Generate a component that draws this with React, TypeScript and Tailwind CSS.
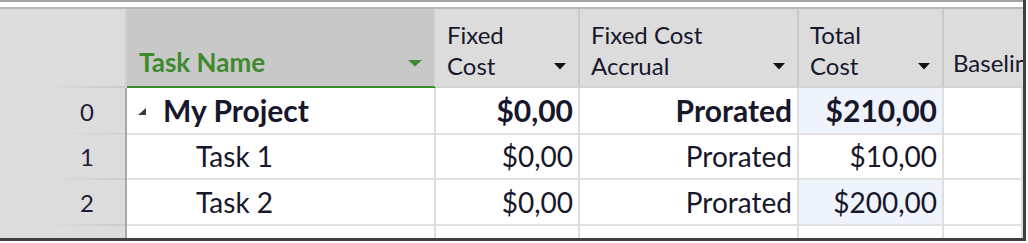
import React from 'react'

const cols = 'grid grid-cols-[127px_309px_144px_219px_145px_1fr]'
const ink = 'text-[#17172b]'

function Caret({ color = '#111111', w = 11 }: { color?: string; w?: number }) {
  return (
    <svg width={w} height="7" viewBox="0 0 11 7" preserveAspectRatio="none" className="shrink-0">
      <polygon points="0,0 11,0 5.5,6.5" fill={color} />
    </svg>
  )
}

function HeadCell({ lines, last }: { lines: string[]; last?: boolean }) {
  return (
    <div
      className={`flex items-end justify-between bg-[#dcdcdc] border-b-2 border-b-[#d2d2d2] pl-[11px] pr-[12px] pb-[5px] ${
        last ? '' : 'border-r-2 border-r-[#c9c9c9]'
      }`}
    >
      <div className={`text-[24px] leading-[31px] ${ink} whitespace-nowrap`}>
        {lines.map((l) => (
          <div key={l}>{l}</div>
        ))}
      </div>
      {!last && (
        <div className="mb-[11px]">
          <Caret w={12} />
        </div>
      )}
    </div>
  )
}

type Row = { id: string; name: string; fixed: string; accrual: string; total: string; bold?: boolean; hi?: boolean }

const rows: Row[] = [
  { id: '0', name: 'My Project', fixed: '$0,00', accrual: 'Prorated', total: '$210,00', bold: true, hi: true },
  { id: '1', name: 'Task 1', fixed: '$0,00', accrual: 'Prorated', total: '$10,00' },
  { id: '2', name: 'Task 2', fixed: '$0,00', accrual: 'Prorated', total: '$200,00', hi: true },
]

function DataRow({ row }: { row: Row }) {
  const weight = row.bold ? 'font-bold text-[30px]' : 'font-normal text-[28px]'
  const cell = `flex items-center border-b-2 border-b-[#e1e1e1] border-r-2 border-r-[#dedede] ${ink} ${weight}`
  return (
    <div className={`${cols} h-[46px] shrink-0`}>
      <div className="relative flex items-center justify-end bg-[#dcdcdc] border-r-2 border-r-[#a8a8a8] pr-[31px] text-[24px] text-[#1c1c3a]">
        <div className="absolute bottom-0 left-[50px] right-0 h-[2px] bg-gradient-to-r from-[#dcdcdc] to-[#cbcbcb]" />
        {row.id}
      </div>
      <div className={`${cell} ${row.bold ? 'pl-[11px]' : 'pl-[69px]'}`}>
        {row.bold && (
          <svg width="9" height="9" viewBox="0 0 9 9" className="mr-[16px] mt-[2px]">
            <polygon points="0,8 8,1 8,8" fill="#3a3a3a" />
          </svg>
        )}
        {row.name}
      </div>
      <div className={`${cell} justify-end pr-[5px]`}>{row.fixed}</div>
      <div className={`${cell} justify-end pr-[5px]`}>{row.accrual}</div>
      <div className={`${cell} justify-end pr-[5px] ${row.hi ? 'bg-[#eef3fc]' : ''}`}>{row.total}</div>
      <div className={`${cell} border-r-0`} />
    </div>
  )
}

export default function App() {
  return (
    <div className="w-[1028px] h-[243px] bg-white overflow-hidden font-['Lato','Open_Sans',sans-serif]">
      <div className="w-[1026px] h-[241px] border-r-[3px] border-b-[3px] border-[#3f3f3f] flex flex-col overflow-hidden bg-white">
        <div className="h-[2px] shrink-0 bg-[#a4a4a4]" />
        <div className="h-[5px] shrink-0 bg-white" />
        <div className="h-[2px] shrink-0 bg-[#b7b7b7]" />

        <div className={`${cols} h-[79px] shrink-0`}>
          <div className="relative bg-[#dcdcdc] border-r-2 border-r-[#d0d0d0]">
            <div className="absolute bottom-0 left-[50px] right-0 h-[2px] bg-gradient-to-r from-[#dcdcdc] to-[#c9c9c9]" />
          </div>
          <div className="flex items-end justify-between bg-[#c8c8c8] border-b-2 border-b-[#3b8c30] border-r-2 border-r-[#d6d6d6] pl-[12px] pr-[12px] pb-[8px]">
            <span className="text-[26px] leading-[31px] font-bold text-[#3e8a2f]">Task Name</span>
            <div className="mb-[11px]">
              <Caret color="#3e8a2f" w={14} />
            </div>
          </div>
          <HeadCell lines={['Fixed', 'Cost']} />
          <HeadCell lines={['Fixed Cost', 'Accrual']} />
          <HeadCell lines={['Total', 'Cost']} />
          <div className="flex items-end bg-[#dcdcdc] border-b-2 border-b-[#d2d2d2] pl-[9px] pb-[8px] overflow-hidden">
            <span className={`text-[24px] leading-[31px] ${ink} whitespace-nowrap`}>Baseline Cost</span>
          </div>
        </div>

        {rows.map((r) => (
          <DataRow key={r.id} row={r} />
        ))}
        <DataRow row={{ id: '', name: '', fixed: '', accrual: '', total: '' }} />
      </div>
    </div>
  )
}
